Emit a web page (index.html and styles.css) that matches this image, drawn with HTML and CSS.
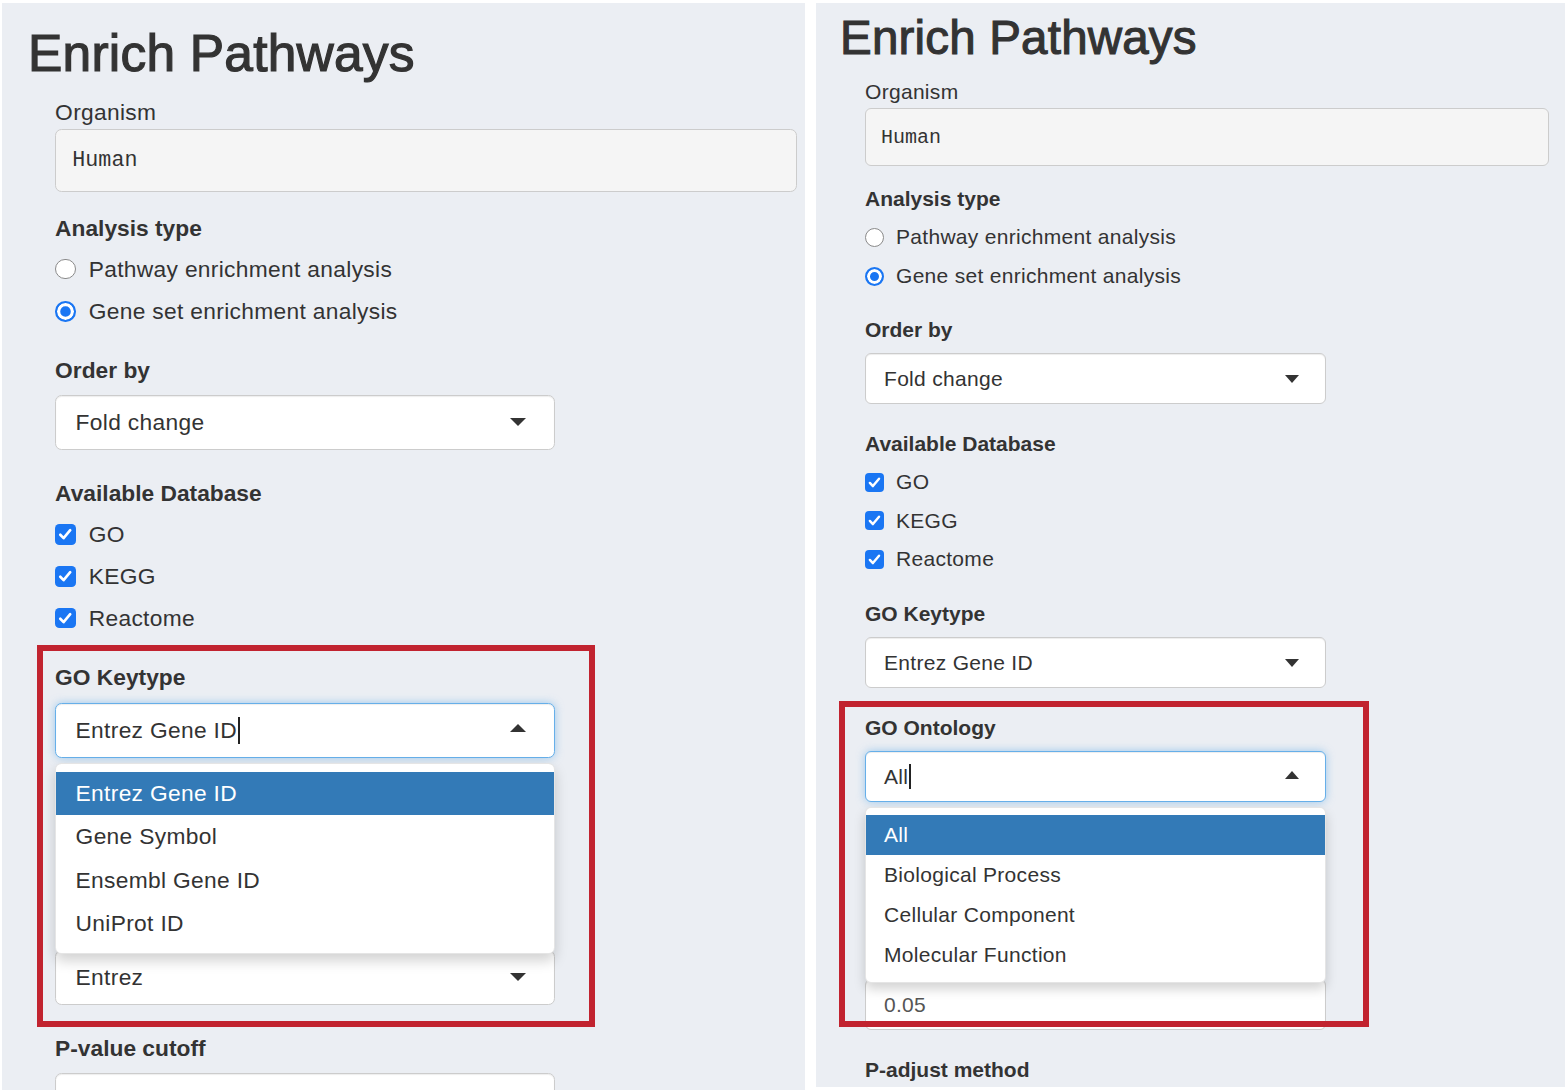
FILE: index.html
```html
<!DOCTYPE html>
<html lang="en">
<head>
<meta charset="utf-8">
<title>Enrich Pathways</title>
<link rel="stylesheet" href="styles.css">
</head>
<body>
<div class="page">
  <section class="panel panel-left">
    <div class="content content-left">
      <h1 class="title">Enrich Pathways</h1>
      <div class="field-plain">
        <div class="plain-label">Organism</div>
        <div class="readonly-input">Human</div>
      </div>
      <div class="form-group group-radio">
        <label class="group-label">Analysis type</label>
        <div class="options">
          <div class="option"><span class="radio"></span>Pathway enrichment analysis</div>
          <div class="option"><span class="radio checked"></span>Gene set enrichment analysis</div>
        </div>
      </div>
      <div class="form-group">
        <label class="group-label">Order by</label>
        <div class="select-wrap"><div class="select">Fold change<span class="caret"></span></div></div>
      </div>
      <div class="form-group">
        <label class="group-label">Available Database</label>
        <div class="options options-check">
          <div class="option"><span class="check"><svg viewBox="0 0 18 18"><path d="M4.6 9.4l2.9 3 5.8-7"/></svg></span>GO</div>
          <div class="option"><span class="check"><svg viewBox="0 0 18 18"><path d="M4.6 9.4l2.9 3 5.8-7"/></svg></span>KEGG</div>
          <div class="option"><span class="check"><svg viewBox="0 0 18 18"><path d="M4.6 9.4l2.9 3 5.8-7"/></svg></span>Reactome</div>
        </div>
      </div>
      <div class="form-group">
        <label class="group-label">GO Keytype</label>
        <div class="select-wrap">
          <div class="select focused">Entrez Gene ID<span class="cursor"></span><span class="caret"></span></div>
          <div class="dropdown">
            <div class="opt active">Entrez Gene ID</div>
            <div class="opt">Gene Symbol</div>
            <div class="opt">Ensembl Gene ID</div>
            <div class="opt">UniProt ID</div>
          </div>
        </div>
      </div>
      <div class="form-group covered">
        <label class="group-label">GO Ontology</label>
        <div class="select-wrap"><div class="select">All<span class="caret"></span></div></div>
      </div>
      <div class="form-group">
        <label class="group-label covered">KEGG Keytype</label>
        <div class="select-wrap"><div class="select">Entrez<span class="caret"></span></div></div>
      </div>
      <div class="form-group">
        <label class="group-label">P-value cutoff</label>
        <div class="text-input"></div>
      </div>
    </div>
    <div class="highlight-box hb-left"></div>
  </section>

  <section class="panel panel-right">
    <div class="content content-right">
      <h1 class="title">Enrich Pathways</h1>
      <div class="field-plain">
        <div class="plain-label">Organism</div>
        <div class="readonly-input">Human</div>
      </div>
      <div class="form-group group-radio">
        <label class="group-label">Analysis type</label>
        <div class="options">
          <div class="option"><span class="radio"></span>Pathway enrichment analysis</div>
          <div class="option"><span class="radio checked"></span>Gene set enrichment analysis</div>
        </div>
      </div>
      <div class="form-group">
        <label class="group-label">Order by</label>
        <div class="select-wrap"><div class="select">Fold change<span class="caret"></span></div></div>
      </div>
      <div class="form-group">
        <label class="group-label">Available Database</label>
        <div class="options options-check">
          <div class="option"><span class="check"><svg viewBox="0 0 18 18"><path d="M4.6 9.4l2.9 3 5.8-7"/></svg></span>GO</div>
          <div class="option"><span class="check"><svg viewBox="0 0 18 18"><path d="M4.6 9.4l2.9 3 5.8-7"/></svg></span>KEGG</div>
          <div class="option"><span class="check"><svg viewBox="0 0 18 18"><path d="M4.6 9.4l2.9 3 5.8-7"/></svg></span>Reactome</div>
        </div>
      </div>
      <div class="form-group">
        <label class="group-label">GO Keytype</label>
        <div class="select-wrap"><div class="select">Entrez Gene ID<span class="caret"></span></div></div>
      </div>
      <div class="form-group">
        <label class="group-label">GO Ontology</label>
        <div class="select-wrap">
          <div class="select focused">All<span class="cursor"></span><span class="caret"></span></div>
          <div class="dropdown">
            <div class="opt active">All</div>
            <div class="opt">Biological Process</div>
            <div class="opt">Cellular Component</div>
            <div class="opt">Molecular Function</div>
          </div>
        </div>
      </div>
      <div class="form-group covered">
        <label class="group-label">KEGG Keytype</label>
        <div class="select-wrap"><div class="select">Entrez<span class="caret"></span></div></div>
      </div>
      <div class="form-group">
        <label class="group-label covered">P-value cutoff</label>
        <div class="text-input">0.05</div>
      </div>
      <div class="form-group">
        <label class="group-label">P-adjust method</label>
        <div class="select-wrap"><div class="select"><span class="caret"></span></div></div>
      </div>
    </div>
    <div class="highlight-box hb-right"></div>
  </section>
</div>
</body>
</html>
```

FILE: styles.css
```css
* { box-sizing: border-box; }

html, body {
  margin: 0;
  background: #ffffff;
}

body {
  width: 1566px;
  height: 1090px;
  overflow: hidden;
  font-family: "Liberation Sans", Arial, Helvetica, sans-serif;
  color: #333333;
}

.page {
  display: flex;
  align-items: flex-start;
  gap: 11px;
  padding: 3px 0 0 2px;
}

.panel {
  position: relative;
  background: #ebeef3;
  overflow: hidden;
}

.panel-left { width: 803px; height: 1087px; }
.panel-right { width: 749px; height: 1084px; }

.content { padding-left: 49px; }
.content-left { zoom: 1.084; padding-top: 20.5px; }
.content-right { padding-top: 9px; }

.title {
  margin: 0 0 13px -25px;
  font-size: 47.5px;
  line-height: 52px;
  font-weight: 400;
  letter-spacing: 0.2px;
  -webkit-text-stroke: 1.1px #333333;
  color: #333333;
}

.field-plain { margin-bottom: 18px; }

.plain-label {
  font-size: 21px;
  line-height: 30px;
  letter-spacing: 0.3px;
  margin-bottom: 1px;
}

.readonly-input {
  width: 684px;
  height: 58px;
  display: flex;
  align-items: center;
  padding: 0 15px;
  background: #f5f5f5;
  border: 1px solid #cccccc;
  border-radius: 6px;
  font-family: "Liberation Mono", "DejaVu Sans Mono", monospace;
  font-size: 20px;
  color: #333333;
}

.form-group { margin-bottom: 25px; }
.group-radio { margin-bottom: 24px; }

.covered { visibility: hidden; }

.group-label {
  display: block;
  font-size: 21px;
  line-height: 30px;
  font-weight: 700;
  margin-bottom: 8px;
}

.options {
  display: flex;
  flex-direction: column;
  gap: 9px;
}

.options-check { gap: 8.5px; }

.option {
  display: flex;
  align-items: center;
  gap: 12px;
  font-size: 21px;
  line-height: 30px;
  letter-spacing: 0.3px;
}

.radio {
  flex: none;
  width: 19px;
  height: 19px;
  border-radius: 50%;
  border: 1px solid #8a8a8a;
  background: #ffffff;
}

.radio.checked {
  border: 2px solid #1a76f3;
  background: #1a76f3;
  box-shadow: inset 0 0 0 3px #ffffff;
}

.check {
  flex: none;
  width: 19px;
  height: 19px;
  border-radius: 4px;
  background: #1a76f3;
  display: flex;
}

.check svg {
  width: 19px;
  height: 19px;
}

.check path {
  fill: none;
  stroke: #ffffff;
  stroke-width: 2.3;
  stroke-linecap: round;
  stroke-linejoin: round;
}

.select-wrap {
  position: relative;
  width: 461px;
}

.select {
  position: relative;
  height: 51px;
  display: flex;
  align-items: center;
  padding: 0 18px;
  background: #ffffff;
  border: 1px solid #cccccc;
  border-radius: 6px;
  box-shadow: inset 0 1px 1px rgba(0, 0, 0, 0.075);
  font-size: 21px;
  letter-spacing: 0.3px;
  color: #333333;
}

.caret {
  position: absolute;
  right: 26px;
  top: 50%;
  margin-top: -4px;
  width: 0;
  height: 0;
  border-left: 7.5px solid transparent;
  border-right: 7.5px solid transparent;
  border-top: 8px solid #333333;
}

.select.focused {
  border-color: #66afe9;
  box-shadow: inset 0 1px 1px rgba(0, 0, 0, 0.075), 0 0 8px rgba(102, 175, 233, 0.6);
}

.select.focused .caret {
  border-top: 0;
  border-bottom: 8px solid #333333;
  margin-top: -6px;
}

.cursor {
  display: inline-block;
  width: 1.5px;
  height: 25px;
  margin-left: 1px;
  background: #222222;
}

.dropdown {
  position: absolute;
  top: calc(100% + 5px);
  left: 0;
  right: 0;
  z-index: 5;
  padding: 7px 0;
  background: #ffffff;
  border: 1px solid rgba(0, 0, 0, 0.1);
  border-radius: 6px;
  box-shadow: 0 6px 12px rgba(0, 0, 0, 0.175);
}

.opt {
  height: 40px;
  line-height: 40px;
  padding: 0 18px;
  font-size: 21px;
  letter-spacing: 0.3px;
  color: #333333;
}

.opt.active {
  background: #337ab7;
  color: #ffffff;
}

.text-input {
  width: 461px;
  height: 51px;
  display: flex;
  align-items: center;
  padding: 0 18px;
  background: #ffffff;
  border: 1px solid #cccccc;
  border-radius: 6px;
  box-shadow: inset 0 1px 1px rgba(0, 0, 0, 0.075);
  font-size: 21px;
  letter-spacing: 0.3px;
  color: #555555;
}

.highlight-box {
  position: absolute;
  z-index: 10;
  border: 6px solid #c1232f;
  pointer-events: none;
}

.hb-left { left: 35px; top: 642px; width: 558px; height: 382px; }
.hb-right { left: 23px; top: 698px; width: 530px; height: 326px; }
```
